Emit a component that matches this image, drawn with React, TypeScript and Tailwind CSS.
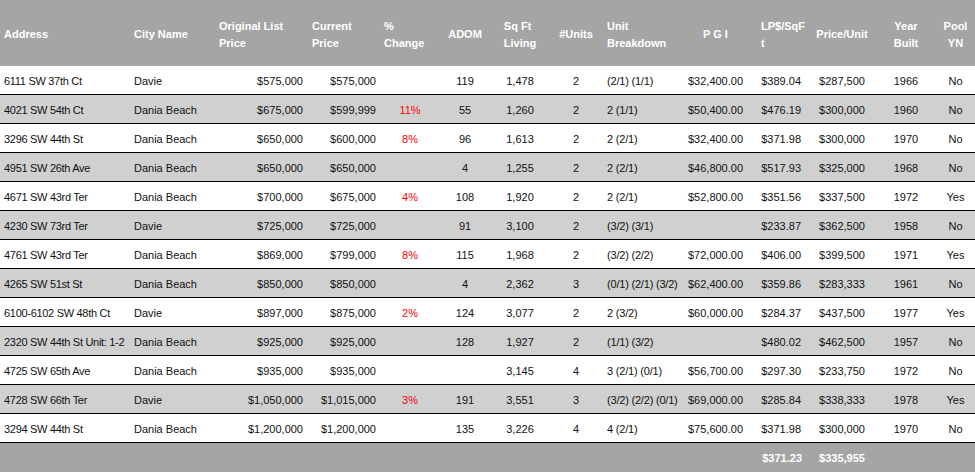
import React from 'react';

type Row = {
  address: string;
  city: string;
  orig: string;
  current: string;
  change: string;
  adom: string;
  sqft: string;
  units: string;
  breakdown: string;
  pgi: string;
  lpSqft: string;
  perUnit: string;
  year: string;
  pool: string;
};

const rows: Row[] = [
  { address: '6111 SW 37th Ct', city: 'Davie', orig: '$575,000', current: '$575,000', change: '', adom: '119', sqft: '1,478', units: '2', breakdown: '(2/1) (1/1)', pgi: '$32,400.00', lpSqft: '$389.04', perUnit: '$287,500', year: '1966', pool: 'No' },
  { address: '4021 SW 54th Ct', city: 'Dania Beach', orig: '$675,000', current: '$599,999', change: '11%', adom: '55', sqft: '1,260', units: '2', breakdown: '2 (1/1)', pgi: '$50,400.00', lpSqft: '$476.19', perUnit: '$300,000', year: '1960', pool: 'No' },
  { address: '3296 SW 44th St', city: 'Dania Beach', orig: '$650,000', current: '$600,000', change: '8%', adom: '96', sqft: '1,613', units: '2', breakdown: '2 (2/1)', pgi: '$32,400.00', lpSqft: '$371.98', perUnit: '$300,000', year: '1970', pool: 'No' },
  { address: '4951 SW 26th Ave', city: 'Dania Beach', orig: '$650,000', current: '$650,000', change: '', adom: '4', sqft: '1,255', units: '2', breakdown: '2 (2/1)', pgi: '$46,800.00', lpSqft: '$517.93', perUnit: '$325,000', year: '1968', pool: 'No' },
  { address: '4671 SW 43rd Ter', city: 'Dania Beach', orig: '$700,000', current: '$675,000', change: '4%', adom: '108', sqft: '1,920', units: '2', breakdown: '2 (2/1)', pgi: '$52,800.00', lpSqft: '$351.56', perUnit: '$337,500', year: '1972', pool: 'Yes' },
  { address: '4230 SW 73rd Ter', city: 'Davie', orig: '$725,000', current: '$725,000', change: '', adom: '91', sqft: '3,100', units: '2', breakdown: '(3/2) (3/1)', pgi: '', lpSqft: '$233.87', perUnit: '$362,500', year: '1958', pool: 'No' },
  { address: '4761 SW 43rd Ter', city: 'Dania Beach', orig: '$869,000', current: '$799,000', change: '8%', adom: '115', sqft: '1,968', units: '2', breakdown: '(3/2) (2/2)', pgi: '$72,000.00', lpSqft: '$406.00', perUnit: '$399,500', year: '1971', pool: 'Yes' },
  { address: '4265 SW 51st St', city: 'Dania Beach', orig: '$850,000', current: '$850,000', change: '', adom: '4', sqft: '2,362', units: '3', breakdown: '(0/1) (2/1) (3/2)', pgi: '$62,400.00', lpSqft: '$359.86', perUnit: '$283,333', year: '1961', pool: 'No' },
  { address: '6100-6102 SW 48th Ct', city: 'Davie', orig: '$897,000', current: '$875,000', change: '2%', adom: '124', sqft: '3,077', units: '2', breakdown: '2 (3/2)', pgi: '$60,000.00', lpSqft: '$284.37', perUnit: '$437,500', year: '1977', pool: 'Yes' },
  { address: '2320 SW 44th St Unit: 1-2', city: 'Dania Beach', orig: '$925,000', current: '$925,000', change: '', adom: '128', sqft: '1,927', units: '2', breakdown: '(1/1) (3/2)', pgi: '', lpSqft: '$480.02', perUnit: '$462,500', year: '1957', pool: 'No' },
  { address: '4725 SW 65th Ave', city: 'Dania Beach', orig: '$935,000', current: '$935,000', change: '', adom: '', sqft: '3,145', units: '4', breakdown: '3 (2/1) (0/1)', pgi: '$56,700.00', lpSqft: '$297.30', perUnit: '$233,750', year: '1972', pool: 'No' },
  { address: '4728 SW 66th Ter', city: 'Davie', orig: '$1,050,000', current: '$1,015,000', change: '3%', adom: '191', sqft: '3,551', units: '3', breakdown: '(3/2) (2/2) (0/1)', pgi: '$69,000.00', lpSqft: '$285.84', perUnit: '$338,333', year: '1978', pool: 'Yes' },
  { address: '3294 SW 44th St', city: 'Dania Beach', orig: '$1,200,000', current: '$1,200,000', change: '', adom: '135', sqft: '3,226', units: '4', breakdown: '4 (2/1)', pgi: '$75,600.00', lpSqft: '$371.98', perUnit: '$300,000', year: '1970', pool: 'No' },
];

const cols =
  'grid grid-cols-[130px_85px_93px_72px_60px_50px_60px_52px_81px_65px_60px_68px_60px_39px]';

export default function App() {
  return (
    <div
      className="w-[975px] h-[472px] bg-white text-[11px] text-[#111]"
      style={{ fontFamily: '"Liberation Sans", Arial, sans-serif' }}
    >
      {/* header */}
      <div className={`${cols} h-[66px] bg-[#a5a5a5] text-white font-bold leading-[17px] pt-[3px]`}>
        <div className="flex items-center pl-1">Address</div>
        <div className="flex items-center pl-1">City Name</div>
        <div className="flex items-center pl-1">Original List<br />Price</div>
        <div className="flex items-center pl-1">Current<br />Price</div>
        <div className="flex items-center pl-1">%<br />Change</div>
        <div className="flex items-center justify-center">ADOM</div>
        <div className="flex items-center justify-center">
          <div className="text-left">Sq Ft<br />Living</div>
        </div>
        <div className="flex items-center justify-center">#Units</div>
        <div className="flex items-center pl-[5px]">Unit<br />Breakdown</div>
        <div className="flex items-center justify-center">P G I</div>
        <div className="flex items-center pl-[13px]">LP$/SqF<br />t</div>
        <div className="flex items-center justify-center">Price/Unit</div>
        <div className="flex items-center justify-center text-center">Year<br />Built</div>
        <div className="flex items-center justify-center text-center">Pool<br />YN</div>
      </div>

      {rows.map((r, i) => (
        <div
          key={r.address}
          className={`${cols} h-[29px] border-b border-black pt-[3px] whitespace-nowrap ${i % 2 === 1 ? 'bg-[#d0d0d0]' : 'bg-white'}`}
        >
          <div className="flex items-center pl-1 tracking-[-0.3px]">{r.address}</div>
          <div className="flex items-center pl-1">{r.city}</div>
          <div className="flex items-center justify-end pr-[5px]">{r.orig}</div>
          <div className="flex items-center justify-end pr-1">{r.current}</div>
          <div className="flex items-center justify-center text-[#ff0000]">{r.change}</div>
          <div className="flex items-center justify-center">{r.adom}</div>
          <div className="flex items-center justify-center">{r.sqft}</div>
          <div className="flex items-center justify-center">{r.units}</div>
          <div className="flex items-center pl-[5px] tracking-[-0.2px]">{r.breakdown}</div>
          <div className="flex items-center justify-center">{r.pgi}</div>
          <div className="flex items-center justify-end pr-[7px]">{r.lpSqft}</div>
          <div className="flex items-center justify-center">{r.perUnit}</div>
          <div className="flex items-center justify-center">{r.year}</div>
          <div className="flex items-center justify-center">{r.pool}</div>
        </div>
      ))}

      {/* totals */}
      <div className={`${cols} h-[29px] bg-[#a5a5a5] text-white font-bold pt-[2px]`}>
        <div className="col-start-11 flex items-center justify-end pr-[6px]">$371.23</div>
        <div className="flex items-center justify-center">$335,955</div>
      </div>
    </div>
  );
}
